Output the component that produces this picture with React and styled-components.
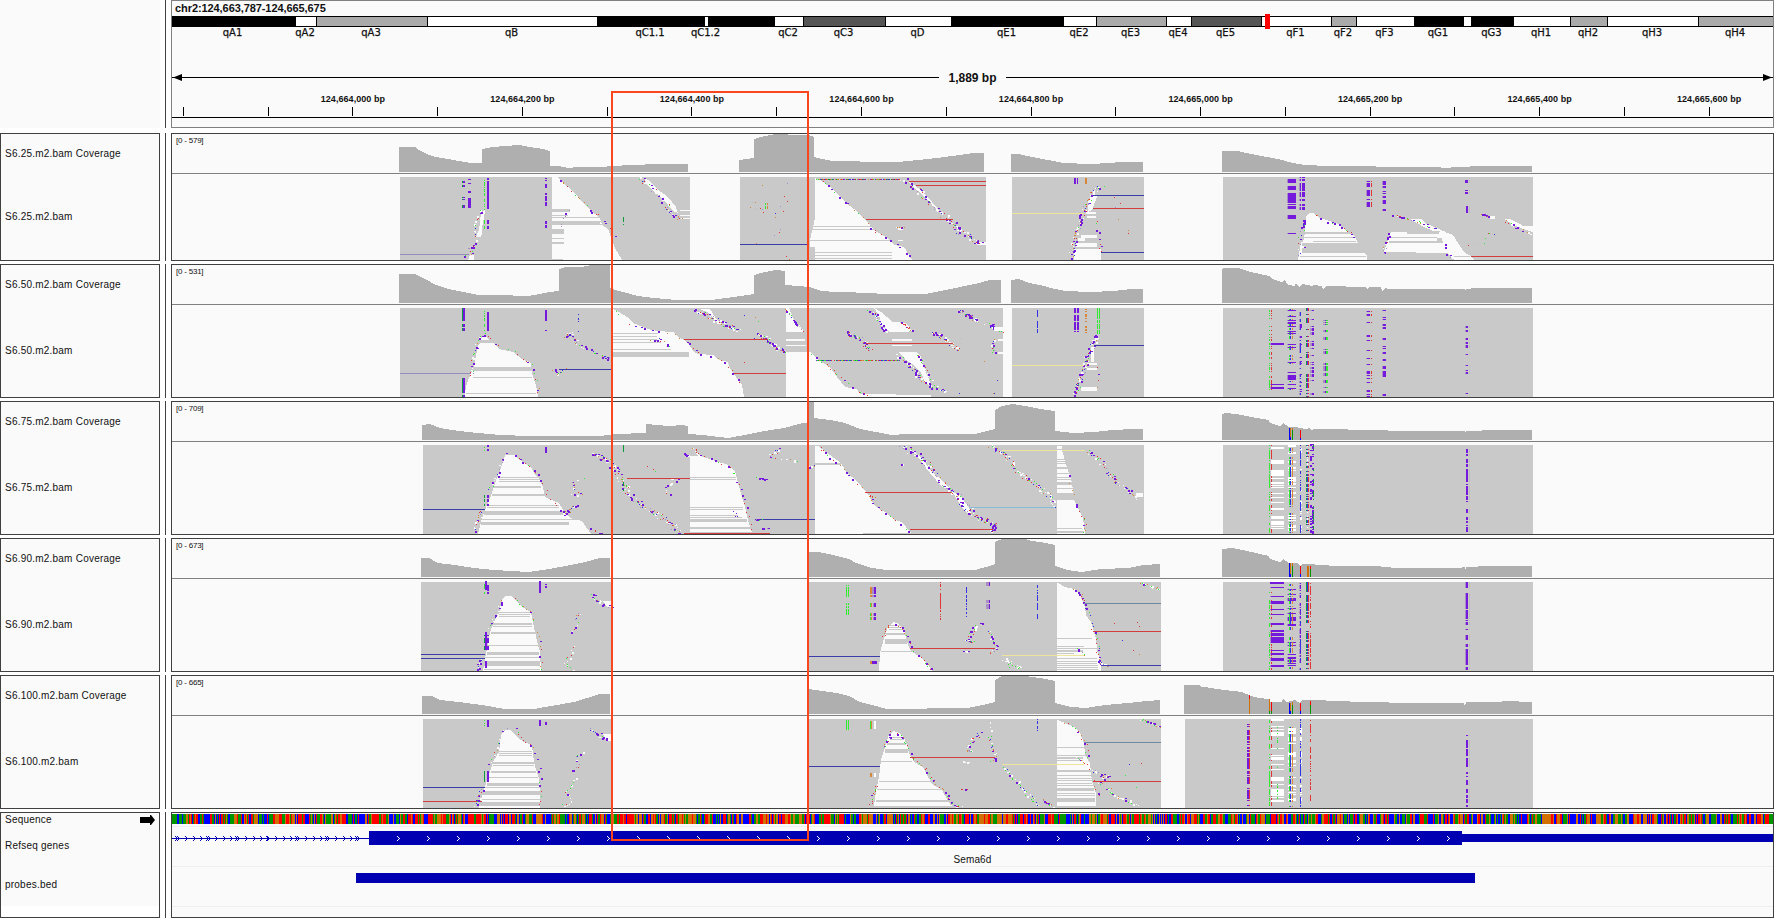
import React from 'react';
import styled, { createGlobalStyle } from 'styled-components';

const GlobalStyle = createGlobalStyle`
  html, body { margin: 0; padding: 0; background: #fff; }
  body { font-family: "Liberation Sans", Arial, sans-serif; color: #111; overflow: hidden; }
`;

const COLORS = {
  P: '#7519dc', M: '#a98ec4', R: '#e23636', G: '#32eb32', D: '#0a9c3c', B: '#3232e6',
  O: '#d6873a', W: '#fafafa', X: '#ffffff', K: '#c9c9c9', L: '#bdbdbd',
  red: '#d23c3c', blue: '#3c3caa', yellow: '#ece59a', violet: '#988cbe', slate: '#6f8a9f', sky: '#84bcd9',
};

/* Track data is stored in three horizontal tiles; these map it to panel pixels. */
const TILE_X = [0, 600, 1190];
const TILE_SCALE = [2.6133, 2.6133, 2.609];
const PANEL_LEFT = 172;
const toX = (t, x) => Math.round(TILE_X[t] + x / TILE_SCALE[t]) - PANEL_LEFT;

const makeRandom = (seed) => {
  let a = seed >>> 0;
  return () => {
    a = (a + 0x6d2b79f5) >>> 0;
    let t = a;
    t = Math.imul(t ^ (t >>> 15), t | 1);
    t ^= t + Math.imul(t ^ (t >>> 7), t | 61);
    return ((t ^ (t >>> 14)) >>> 0) / 4294967296;
  };
};

const points = (s) => s.trim().split(/\s+/).map((p) => p.split(',').map(Number));
const box = (x, y, w, h) => `M${x} ${y}h${w}v${h}h${-w}z`;

/* w: gap polygon, g: read rows, l: insert line, s: mismatches scattered along a path, c: column of variants */
const w = (t, p) => ({ k: 'w', t, p });
const g = (t, rows) => ({ k: 'g', t, rows });
const v = (t, rows) => ({ k: 'g', t, rows, c: 'W' });
const l = (t, x0, x1, y, c) => ({ k: 'l', t, x0, x1, y, c });
const s = (t, p, n, spread = 6, pal = 'PPPGRBOWWWM') => ({ k: 's', t, p, n, spread, pal });
const c = (t, y0, y1, density, cols) => ({ k: 'c', t, y0, y1, density, cols });

const edge = 'PPGRRO';
const sparse = 'GROBLM';

const TRACKS = [
  {
    name: 'S6.25.m2.bam', range: '[0 - 579]', height: 128, y0: 0, top: 133,
    blocks: [[400, 690], [740, 986], [1012, 1144], [1223, 1533]],
    coverage: [
      [0, '1043,441 1085,441 1090,447 1105,456 1120,465 1140,472 1170,478 1200,484 1230,489 1260,489 1260,446 1285,441 1320,438 1355,436 1385,440 1420,446 1437,453 1437,498 1460,499 1485,504 1510,502 1568,501'],
      [1, '0,501 35,498 80,495 155,493 200,492 230,492'],
      [1, '363,480 402,474 402,417 430,408 460,403 520,404 545,404 558,412 558,472 580,477 610,483 635,482 725,486 780,486 830,480 880,475 920,468 960,463 975,459 1004,459'],
      [1, '1074,461 1095,461 1130,471 1170,481 1210,489 1280,493 1330,488 1360,487 1390,485 1418,486'],
      [2, '83,453 125,453 160,463 200,472 240,481 270,490 300,494 360,497 460,499 510,500 650,501 660,503 700,501 760,498 892,498'],
    ],
    bars: [],
    ops: [
      c(0, 540, 625, 0.6, [[1207, 1211, 'D'], [1211, 1216, 'P']]),
      c(0, 537, 625, 0.7, [[1223, 1231, 'P']]),
      c(0, 537, 630, 0.6, [[1265, 1268, 'G']]),
      c(0, 534, 626, 0.92, [[1273, 1278, 'P']]),
      c(0, 660, 688, 0.8, [[1265, 1268, 'G'], [1273, 1278, 'P']]),
      c(0, 534, 567, 0.6, [[1423, 1429, 'P']]),
      c(0, 580, 622, 0.75, [[1423, 1429, 'P']]),
      c(0, 663, 688, 0.5, [[1423, 1429, 'P']]),
      w(0, '1258,640 1267,630 1264,655 1259,680 1260,700 1258,712 1245,712 1252,690 1254,665'),
      w(0, '1224,779 1229,765 1240,765 1240,779'),
      s(0, '1258,628 1248,645 1240,670 1238,700 1243,735 1228,742 1230,760 1213,772', 30, 4),
      l(0, 1045, 1225, 763, 'violet'),
      w(0, '1443,531 1455,531 1485,562 1510,590 1540,628 1568,655 1568,779 1443,779'),
      w(1, '0,655 5,675 20,687 30,710 40,745 58,779 0,779'),
      g(0, '1443,1490,627,637 1443,1485,645,648 1443,1568,651,655 1443,1568,663,675 1443,1475,687,701 1443,1475,714,717 1443,1475,726,731 1443,1470,776,779'),
      g(1, '0,12,663,666 0,14,672,675'),
      s(0, '1455,534 1485,562 1515,592 1540,628 1568,648', 14, 3, edge),
      s(0, '1488,630 1470,648 1462,690', 6, 4, 'PM'),
      s(1, '0,650 20,676 40,712', 4, 2, edge),
      w(1, '118,537 128,540 150,567 178,590 198,620 203,640 192,632 168,600 145,577 124,555'),
      v(1, '208,235,630,633 210,235,645,648 212,235,654,657'),
      s(1, '100,532 118,545 150,580 175,615 185,640 215,658', 50, 7),
      c(1, 651, 675, 0.6, [[60, 64, 'D']]),
      s(1, '385,560 510,550 515,610 380,610 435,615 485,620 380,650 500,680 400,740 520,770', 22, 30, sparse),
      c(1, 609, 627, 0.8, [[432, 434, 'G'], [436, 439, 'O']]),
      l(1, 366, 541, 733, 'blue'),
      w(1, '562,533 575,540 600,560 615,572 640,605 665,628 695,660 715,690 750,715 770,735 795,740 815,779 562,779 545,779 550,720 562,655'),
      g(1, '553,715,678,681 553,718,687,690 546,765,720,722 545,562,742,779 562,763,756,759 562,763,765,768 562,763,773,775'),
      s(1, '565,534 600,560 640,605 695,660 720,695 765,722 815,778', 24, 3, edge),
      { k: 'm', t: 1, x0: 565, x1: 785, y: 538 },
      v(1, '780,793,684,690 780,793,720,723 986,1009,727,735'),
      w(1, '800,540 812,548 838,570 868,605 896,645 886,637 860,605 830,572'),
      s(1, '790,535 830,570 860,605 900,650 925,670 935,690 970,715 990,733', 100, 8),
      s(1, '772,680 795,682', 6, 1),
      l(1, 808, 1009, 544, 'red'), l(1, 825, 1009, 556, 'red'), l(1, 695, 922, 658, 'red'),
      c(1, 534, 552, 0.7, [[1240, 1243, 'P'], [1247, 1250, 'P'], [1268, 1272, 'O']]),
      w(1, '1292,575 1300,590 1286,630 1276,635 1275,610'),
      v(1, '1270,1297,637,641 1272,1297,648,654 1256,1298,705,713 1250,1268,713,722 1244,1300,728,740 1240,1308,747,770 1238,1310,772,779'),
      s(1, '1310,558 1285,575 1270,605 1262,635 1255,670 1245,700 1235,735 1228,775', 85, 6),
      s(1, '1298,650 1302,720 1312,757', 9, 3, edge),
      s(1, '1340,590 1355,630 1380,735', 6, 10, sparse),
      l(1, 1288, 1422, 586, 'blue'), l(1, 1288, 1422, 625, 'red'), l(1, 1077, 1265, 640, 'yellow'), l(1, 1310, 1422, 757, 'blue'),
      c(2, 538, 549, 1, [[253, 257, 'M'], [256, 277, 'P']]),
      c(2, 555, 703, 0.32, [[253, 257, 'M'], [256, 277, 'P']]),
      c(2, 531, 630, 0.6, [[284, 288, 'M'], [287, 290, 'P'], [292, 299, 'P']]),
      c(2, 660, 685, 0.8, [[294, 302, 'P']]),
      c(2, 534, 630, 0.45, [[459, 463, 'M'], [463, 470, 'P'], [471, 474, 'R']]),
      c(2, 537, 632, 0.65, [[501, 504, 'M'], [504, 511, 'P']]),
      c(2, 537, 585, 0.45, [[717, 725, 'P'], [728, 731, 'L']]),
      c(2, 617, 638, 0.9, [[720, 725, 'P'], [728, 731, 'L']]),
      w(2, '303,650 310,640 322,640 340,655 385,672 412,695 428,705 438,728 296,728 300,700'),
      g(2, '300,425,697,701 297,430,711,714 320,432,722,725'),
      w(2, '289,727 296,727 291,759 455,759 463,768 463,779 281,779'),
      g(2, '291,455,730,758 287,460,768,770'),
      s(2, '320,640 360,665 390,672 410,690 430,712', 16, 3, edge),
      s(2, '300,660 292,690 282,725 296,740 275,768', 18, 5),
      w(2, '525,697 640,697 665,695 685,705 700,730 715,755 735,770 742,779 690,779 672,760 507,757 512,735 520,712'),
      g(2, '565,650,697,702 522,645,712,715 645,658,714,724 520,660,724,728'),
      w(2, '575,657 605,657 612,670 668,695 635,693 610,680'),
      s(2, '530,645 560,655 600,665 640,685', 34, 5),
      s(2, '518,700 508,735 505,758', 14, 4),
      s(2, '660,725 672,762 688,778', 9, 3),
      g(2, '690,730,768,770'),
      w(2, '820,657 835,657 860,672 870,678 895,678 895,696 870,688 845,675'),
      v(2, '782,796,649,656'),
      s(2, '820,660 850,680 888,700', 14, 4), s(2, '755,640 785,652', 8, 3),
      s(2, '760,698 800,700 720,735 800,722', 7, 3, sparse),
      l(2, 733, 895, 769, 'red'),
    ],
  },
  {
    name: 'S6.50.m2.bam', range: '[0 - 531]', height: 134, y0: 260, top: 264,
    blocks: [[400, 1003], [1012, 1144], [1223, 1533]],
    coverage: [
      [0, '1043,41 1085,41 1110,56 1140,75 1170,86 1200,94 1250,105 1300,106 1380,108 1410,103 1435,97 1462,93 1462,26 1480,22 1520,20 1545,15 1568,15'],
      [1, '0,15 26,15 26,84 40,90 70,100 100,108 140,114 200,120 290,119 350,112 402,103 402,45 430,37 460,30 483,32 483,75 520,77 545,82 580,92 615,97 720,99 725,102 850,101 890,94 940,82 990,68 1020,60 1048,60'],
      [1, '1074,60 1095,57 1120,69 1160,78 1190,86 1215,93 1280,97 1340,93 1390,88 1418,87'],
      [2, '83,27 90,23 125,24 160,36 205,49 215,58 240,65 247,60 255,74 275,77 277,69 284,80 292,72 305,76 318,78 318,84 322,75 345,78 347,87 355,79 460,80 463,87 470,81 498,81 501,93 509,84 520,87 685,87 717,87 718,95 721,87 745,84 892,84'],
    ],
    bars: [],
    ops: [
      c(0, 144, 212, 0.7, [[1207, 1210, 'D'], [1210, 1215, 'P']]),
      c(0, 150, 212, 0.6, [[1265, 1268, 'G']]),
      c(0, 150, 212, 0.95, [[1273, 1278, 'P']]),
      c(0, 146, 212, 0.65, [[1423, 1429, 'P']]),
      c(0, 157, 215, 0.5, [[1511, 1513, 'B']]),
      w(0, '1260,228 1267,224 1278,240 1258,240'),
      w(0, '1255,248 1290,250 1305,268 1340,275 1365,298 1388,310 1391,340 1400,375 1405,411 1213,411 1220,370 1230,340 1240,320 1243,285 1250,258'),
      g(0, '1235,1390,321,333 1230,1390,351,354 1218,1402,399,402'),
      c(0, 355, 411, 0.8, [[1208, 1211, 'D'], [1211, 1215, 'P']]),
      l(0, 1045, 1230, 340, 'violet'),
      s(0, '1265,218 1250,232 1243,265 1236,298 1235,330 1228,350', 26, 5),
      s(0, '1270,220 1290,250 1340,272 1365,295 1390,315 1395,340 1408,382 1403,405', 18, 2, edge),
      s(0, '1475,228 1490,220 1510,250 1568,285', 40, 6),
      s(0, '1445,328 1455,340 1475,322', 12, 4),
      l(0, 1462, 1568, 328, 'blue'), l(1, 0, 31, 328, 'blue'),
      s(1, '0,285 28,298', 18, 6),
      w(1, '33,148 50,157 75,175 85,190 125,207 150,213 190,217 205,230 220,240 235,258 245,275 255,281 295,285 305,298 335,305 340,325 355,350 370,375 376,411 33,411'),
      g(1, '33,152,219,222 33,150,228,231 33,150,237,240 33,160,245,248 33,185,266,269 33,232,276,290'),
      s(1, '35,148 85,195 145,210 200,225 240,260 260,282 320,300 345,335 370,378', 26, 3, edge),
      s(1, '135,240 155,235 180,265', 12, 5),
      w(1, '262,148 288,148 300,172 318,194 306,190 284,160'),
      s(1, '250,150 290,170 330,195 362,210', 62, 8),
      s(1, '405,218 435,235 460,260 480,275', 46, 6),
      l(1, 220, 440, 238, 'red'), l(1, 350, 486, 340, 'red'),
      s(1, '350,165 440,185 365,315', 5, 9, sparse),
      w(1, '486,144 495,144 505,175 520,200 536,216 486,216'),
      v(1, '486,536,237,242 486,538,255,258'),
      w(1, '486,276 550,276 570,300 600,320 620,350 640,380 672,388 680,402 865,405 865,411 486,411'),
      s(1, '480,146 500,165 510,190 532,212', 22, 3),
      s(1, '550,280 600,320 620,345 675,395 700,403', 18, 3, edge),
      w(1, '715,145 735,155 765,185 800,190 815,212 800,216 755,216 735,185 728,165'),
      s(1, '700,146 722,165 730,190 750,212', 34, 5), s(1, '785,186 800,195 815,213', 14, 3, edge),
      v(1, '763,815,237,242 763,815,255,258'),
      s(1, '640,218 680,235 705,270', 42, 7), s(1, '865,218 900,235 935,270', 42, 6),
      l(1, 695, 922, 250, 'red'),
      { k: 'm', t: 1, x0: 565, x1: 785, y: 301 },
      w(1, '778,277 825,277 840,290 850,330 862,365 868,382 850,365 838,340 822,318 800,300'),
      s(1, '780,285 810,315 830,345 860,375 905,395', 62, 6), s(1, '830,280 850,320 865,365', 18, 3),
      s(1, '940,148 985,183', 32, 5), s(1, '1010,190 1050,215', 18, 6),
      v(1, '1030,1053,202,214 1040,1053,237,242 1040,1053,276,281'),
      s(1, '1035,235 1022,258 1030,278', 14, 4),
      s(1, '920,400 1030,400 1035,335 920,210', 6, 5, sparse),
      c(1, 147, 220, 0.7, [[1142, 1145, 'B']]),
      c(1, 144, 220, 0.65, [[1240, 1243, 'P'], [1247, 1251, 'P']]),
      c(1, 146, 220, 0.65, [[1268, 1272, 'O']]),
      c(1, 144, 225, 0.72, [[1299, 1301, 'G'], [1303, 1306, 'G']]),
      v(1, '1282,1290,262,305 1272,1298,309,315 1272,1298,323,329 1256,1300,381,392'),
      s(1, '1300,225 1285,255 1270,290 1262,330 1250,370 1243,405', 85, 6),
      s(1, '1300,312 1300,385', 5, 2, edge),
      l(1, 1290, 1422, 256, 'blue'), l(1, 1077, 1265, 316, 'yellow'),
      c(2, 146, 400, 0.4, [[206, 209, 'G'], [211, 214, 'R']]),
      c(2, 146, 400, 0.2, [[209, 212, 'M'], [211, 245, 'P']]),
      c(2, 146, 400, 0.3, [[258, 261, 'G'], [261, 264, 'B'], [266, 269, 'O']]),
      c(2, 144, 390, 0.22, [[253, 257, 'M'], [256, 277, 'P']]),
      c(2, 144, 411, 0.45, [[284, 287, 'M'], [287, 290, 'B']]),
      c(2, 144, 411, 0.2, [[284, 287, 'M'], [287, 292, 'P']]),
      c(2, 144, 411, 0.35, [[303, 306, 'D'], [306, 308, 'P'], [308, 310, 'R']]),
      c(2, 150, 411, 0.25, [[314, 317, 'M'], [318, 324, 'P']]),
      c(2, 144, 400, 0.32, [[347, 352, 'M'], [352, 355, 'P'], [356, 360, 'G']]),
      c(2, 144, 411, 0.18, [[459, 463, 'M'], [463, 470, 'P'], [471, 475, 'R']]),
      c(2, 144, 411, 0.24, [[501, 504, 'M'], [504, 511, 'P']]),
      c(2, 150, 411, 0.18, [[717, 720, 'M'], [720, 725, 'P'], [728, 731, 'L']]),
    ],
  },
  {
    name: 'S6.75.m2.bam', range: '[0 - 709]', height: 134, y0: 260, top: 401,
    blocks: [[423, 1144], [1223, 1533]],
    coverage: [
      [0, '1103,495 1125,492 1150,504 1200,512 1250,519 1310,526 1380,529 1450,528 1568,527'],
      [1, '0,527 40,522 120,518 120,492 180,497 215,495 230,498 230,523 270,525 335,533 380,526 430,514 480,503 530,490 545,490 545,426 558,426 558,474 600,480 640,489 680,507 720,517 760,525 800,523 900,521 980,521 1000,515 1032,508 1032,450 1050,437 1080,433 1110,438 1150,448 1188,454 1188,514 1240,519 1290,516 1340,511 1390,507 1418,508'],
      [2, '83,462 95,459 120,461 160,471 205,479 210,489 235,498 243,490 258,501 275,500 303,508 310,504 318,512 322,507 410,507 412,510 515,510 517,513 717,513 718,521 721,513 760,512 762,510 892,510'],
    ],
    bars: [[258, 504, 540, '#00f'], [261, 504, 531, '#d17105'], [261, 531, 540, '#00f'], [266, 504, 511, '#d17105'], [266, 511, 540, '#009600'], [287, 510, 534, '#f00'], [287, 534, 540, '#00f']],
    ops: [
      c(0, 558, 578, 0.6, [[1265, 1268, 'G']]), c(0, 555, 580, 0.8, [[1273, 1278, 'P']]), c(0, 555, 578, 0.6, [[1423, 1429, 'P']]),
      w(0, '1320,585 1342,585 1360,600 1388,620 1395,640 1410,660 1418,680 1425,710 1460,730 1470,750 1490,775 1520,782 1545,822 1249,822 1258,785 1268,750 1285,700 1300,655 1310,625'),
      g(0, '1303,1410,651,653 1303,1410,657,659 1303,1410,663,665 1292,1415,677,683 1285,1425,702,708 1272,1460,735,737 1272,1460,741,743 1265,1470,752,765 1260,1515,777,779 1258,1487,786,795'),
      c(0, 705, 737, 0.8, [[1265, 1268, 'D'], [1273, 1278, 'P']]),
      l(0, 1105, 1267, 748, 'blue'),
      s(0, '1325,580 1310,600 1302,640 1288,665 1278,690', 18, 3), s(0, '1258,750 1250,780 1240,815', 16, 5),
      s(0, '1340,578 1365,605 1390,620 1410,645 1430,708 1460,740 1475,762', 20, 3, edge), s(0, '1540,800 1568,822', 6, 4, edge),
      s(0, '1545,580 1568,588', 12, 4), s(0, '1525,655 1500,665 1500,682 1518,703 1490,705', 16, 4), s(0, '1502,735 1488,745 1478,762', 16, 5),
      s(1, '0,590 25,605 45,640 65,680 85,715 120,745 150,765 185,790 208,820', 120, 8),
      c(1, 555, 576, 0.8, [[60, 64, 'D']]), c(1, 665, 692, 0.8, [[60, 64, 'D']]),
      s(1, '170,652 200,657 170,680 180,705', 16, 4, 'WWWRP'), s(1, '115,617 160,640', 3, 4, 'RG'),
      l(1, 70, 235, 655, 'red'),
      w(1, '240,558 250,575 270,592 300,602 330,612 352,632 360,670 370,710 380,740 388,780 398,817 235,817 235,588 255,588'),
      g(1, '235,355,650,653 235,355,657,659 235,375,741,743 235,375,747,749 235,360,765,767 235,370,771,773 235,385,777,786 235,395,800,807'),
      s(1, '242,560 255,580 300,600 345,625 365,685 382,742 395,812', 26, 3, edge), s(1, '215,582 232,585', 6, 3),
      s(1, '350,748 360,778', 4, 3, 'P'),
      { k: 'l', t: 1, x0: 220, x1: 443, y: 820, c: 'red' },
      l(1, 405, 562, 778, 'blue'), s(1, '403,778 420,778', 7, 2), s(1, '420,804 438,805', 5, 3, 'PM'),
      s(1, '462,560 462,578 435,583 480,600 520,602', 20, 5), s(1, '405,652 435,657', 7, 2, 'PPG'), s(1, '548,620 558,616', 6, 3),
      w(1, '570,558 600,585 630,610 645,640 670,660 695,695 705,715 720,740 745,755 770,780 790,785 800,800 812,820 562,822 562,558'),
      g(1, '562,630,609,614'),
      s(1, '570,558 600,590 645,637 695,695 720,735 765,775 812,817', 32, 3, edge),
      l(1, 695, 922, 697, 'red'), l(1, 810, 1032, 808, 'red'),
      w(1, '822,580 840,592 868,637 898,665 914,688 895,680 862,640'),
      w(1, '922,695 940,705 965,745 972,768 950,750 930,715'),
      s(1, '785,558 830,585 870,630 900,680 930,700 960,745 990,775 1025,790 1030,815', 170, 8),
      s(1, '700,705 715,710', 8, 4, 'RROGW'), s(1, '785,612', 3, 3, 'PWR'),
      l(1, 1050, 1268, 571, 'yellow'), l(1, 965, 1190, 742, 'sky'),
      s(1, '1020,558 1060,580 1090,630 1130,670 1170,700 1190,745', 90, 7, 'WWWWWPGGRBO'),
      w(1, '1194,557 1207,557 1207,570 1212,590 1220,625 1230,655 1235,690 1240,720 1250,745 1262,775 1268,822 1194,822'),
      g(1, '1194,1207,567,570 1194,1218,596,599 1194,1218,603,606 1194,1220,610,613 1194,1220,620,627 1194,1228,639,642 1194,1230,651,653 1194,1230,657,660 1194,1233,667,675 1194,1235,684,687 1194,1238,699,720 1194,1260,804,806 1194,1264,812,818'),
      s(1, '1222,640 1240,720 1262,770 1268,800 1260,818', 16, 3, edge),
      s(1, '1270,570 1300,595 1330,640 1350,665 1380,690 1410,715', 52, 7), v(1, '1402,1419,699,710'),
      c(2, 555, 820, 0.6, [[206, 209, 'G'], [211, 214, 'R']]),
      c(2, 555, 820, 0.34, [[211, 245, 'X']]),
      c(2, 555, 820, 0.34, [[256, 277, 'X']]),
      c(2, 555, 820, 0.65, [[258, 261, 'G'], [261, 264, 'B'], [266, 269, 'O']]),
      c(2, 555, 820, 0.2, [[287, 292, 'X']]), c(2, 555, 770, 0.6, [[287, 290, 'B']]), c(2, 795, 822, 0.6, [[287, 290, 'B']]),
      c(2, 555, 820, 0.3, [[305, 308, 'X']]),
      c(2, 555, 820, 0.5, [[303, 306, 'D'], [306, 308, 'B'], [308, 310, 'R']]),
      c(2, 553, 822, 0.55, [[313, 318, 'P']]), c(2, 553, 822, 0.55, [[318, 324, 'P']]), c(2, 555, 822, 0.3, [[320, 322, 'D']]),
      c(2, 555, 820, 0.65, [[720, 725, 'P'], [728, 731, 'L']]),
    ],
  },
  {
    name: 'S6.90.m2.bam', range: '[0 - 673]', height: 134, y0: 530, top: 538,
    blocks: [[421, 612], [809, 1161], [1223, 1533]],
    coverage: [
      [0, '1100,84 1122,84 1145,98 1190,106 1240,113 1290,121 1380,126 1420,119 1480,108 1530,95 1568,85'],
      [1, '0,84 26,84'],
      [1, '545,66 570,67 610,74 650,86 670,100 710,115 750,121 980,120 1010,110 1032,102 1032,36 1050,28 1110,28 1130,34 1165,38 1188,44 1188,109 1220,120 1260,125 1310,118 1380,113 1420,105 1463,102'],
      [2, '83,57 110,54 150,64 205,78 210,88 235,96 243,88 258,99 283,99 288,108 292,103 360,105 362,108 495,108 500,111 545,114 700,114 717,111 718,123 721,111 780,109 892,108'],
    ],
    bars: [[258, 99, 141, '#00f'], [261, 99, 132, '#d17105'], [261, 132, 141, '#00f'], [266, 99, 108, '#d17105'], [266, 108, 141, '#009600'], [287, 108, 132, '#f00'], [287, 132, 141, '#00f'], [304, 108, 141, '#d17105'], [308, 108, 141, '#d17105'], [314, 108, 117, '#f00'], [314, 117, 141, '#009600']],
    ops: [
      c(0, 156, 192, 0.5, [[1265, 1268, 'G']]), c(0, 153, 180, 0.9, [[1268, 1273, 'P']]), c(0, 165, 192, 0.8, [[1273, 1278, 'P']]),
      c(0, 153, 190, 0.95, [[1409, 1414, 'P']]), c(0, 162, 186, 0.5, [[1423, 1429, 'P']]),
      w(0, '1320,198 1335,198 1350,215 1370,235 1388,247 1392,275 1398,305 1405,345 1411,365 1413,423 1262,423 1268,385 1275,345 1280,305 1290,275 1303,248 1312,210'),
      g(0, '1303,1385,246,248 1303,1385,252,254 1303,1385,258,261 1288,1390,279,284 1288,1390,288,290 1283,1397,306,311 1275,1405,345,347 1272,1408,366,375 1268,1410,380,382 1265,1412,393,409 1265,1412,417,419'),
      l(0, 1100, 1268, 373, 'blue'), l(0, 1100, 1268, 385, 'blue'),
      c(0, 305, 360, 0.9, [[1267, 1273, 'P']]), c(0, 315, 360, 0.7, [[1265, 1267, 'D'], [1273, 1277, 'P']]), c(0, 390, 415, 0.9, [[1267, 1272, 'P']]),
      s(0, '1312,200 1302,240 1288,270 1277,295', 15, 3), s(0, '1255,385 1248,418', 10, 4),
      s(0, '1340,198 1365,230 1392,250 1408,325 1412,380 1414,420', 20, 3, edge),
      s(0, '1545,192 1553,208 1568,215', 14, 5), s(0, '1522,247 1502,260 1508,288 1495,310', 12, 5), s(0, '1505,345 1488,380 1478,400 1492,418', 16, 5, 'GWWWPR'),
      w(1, '8,212 30,212 30,232 18,230'), s(1, '0,220 28,232', 10, 5),
      c(1, 158, 262, 0.72, [[643, 646, 'G'], [648, 651, 'G']]),
      c(1, 170, 200, 0.8, [[706, 711, 'O'], [711, 715, 'M'], [715, 721, 'P']]),
      c(1, 220, 272, 0.6, [[706, 709, 'G'], [709, 712, 'O'], [713, 716, 'M'], [716, 722, 'P']]),
      c(1, 393, 410, 0.7, [[706, 711, 'O'], [711, 723, 'P']]),
      c(1, 157, 270, 0.6, [[888, 890, 'R']]), c(1, 170, 262, 0.65, [[956, 959, 'B']]),
      c(1, 157, 168, 0.7, [[1009, 1017, 'M'], [1017, 1019, 'P']]), c(1, 210, 237, 0.6, [[1009, 1017, 'M'], [1017, 1019, 'P']]),
      c(1, 160, 266, 0.7, [[1142, 1145, 'B']]),
      w(1, '765,277 782,282 795,300 800,325 805,345 812,362 835,380 855,400 868,423 728,423 733,370 742,325 752,290'),
      g(1, '758,785,285,287 755,795,291,293 755,795,297,299 748,800,309,315 745,803,327,342 735,815,363,365'),
      s(1, '755,280 748,300 738,320', 9, 3, edge), s(1, '775,282 795,300 812,355 850,395 868,420', 24, 3, edge),
      l(1, 545, 732, 379, 'blue'), l(1, 810, 1032, 355, 'red'),
      s(1, '995,277 970,300 960,335 975,332', 30, 6), s(1, '1018,300 1022,320 1035,350 1022,370', 22, 4), s(1, '1055,385 1075,405 1100,412', 20, 6, 'WWWWPG'),
      s(1, '945,364 965,364', 4, 1, 'WP'),
      w(1, '1197,158 1215,170 1240,177 1255,195 1268,230 1270,255 1282,275 1290,305 1297,325 1300,360 1308,400 1310,423 1194,423 1194,158'),
      g(1, '1194,1285,324,327 1194,1265,348,352 1194,1298,354,357 1194,1262,360,366 1194,1240,369,372 1194,1298,385,387 1194,1300,393,396 1194,1300,399,401 1194,1302,405,407 1194,1302,411,413 1194,1302,417,419'),
      l(1, 1050, 1268, 376, 'yellow'),
      s(1, '1240,178 1260,198 1272,232 1288,300 1300,330 1300,380 1308,405', 36, 4, edge + 'GB'), s(1, '1245,352 1268,377', 8, 2),
      s(1, '1300,395 1325,408', 12, 5),
      l(1, 1265, 1466, 220, 'slate'), l(1, 1288, 1466, 304, 'red'), l(1, 1310, 1466, 406, 'blue'),
      s(1, '1410,157 1440,168 1462,178', 18, 4, 'WWGGOP'), s(1, '1345,280 1420,278 1345,345 1435,380', 6, 5, sparse),
      c(2, 185, 420, 0.45, [[206, 209, 'G'], [211, 214, 'R']]),
      c(2, 157, 161, 1, [[209, 245, 'P']]),
      c(2, 172, 423, 0.36, [[209, 212, 'M'], [211, 245, 'P']]),
      c(2, 172, 410, 0.22, [[253, 257, 'M'], [256, 277, 'P']]),
      c(2, 162, 420, 0.65, [[258, 261, 'G'], [261, 264, 'B'], [266, 269, 'O']]),
      c(2, 160, 420, 0.6, [[284, 287, 'M'], [287, 290, 'P']]), c(2, 160, 420, 0.4, [[287, 290, 'B']]),
      c(2, 156, 280, 0.8, [[303, 306, 'D'], [306, 308, 'B'], [308, 310, 'R']]), c(2, 300, 420, 0.6, [[303, 306, 'D'], [306, 308, 'B'], [308, 310, 'R']]),
      c(2, 159, 420, 0.7, [[313, 316, 'R']]),
      c(2, 156, 285, 0.65, [[717, 720, 'M'], [720, 725, 'P'], [728, 731, 'L']]), c(2, 297, 330, 0.6, [[717, 720, 'M'], [720, 725, 'P'], [728, 731, 'L']]), c(2, 342, 420, 0.75, [[717, 720, 'M'], [720, 725, 'P'], [728, 731, 'L']]),
    ],
  },
  {
    name: 'S6.100.m2.bam', range: '[0 - 665]', height: 134, y0: 530, top: 675,
    blocks: [[423, 612], [809, 1161], [1185, 1533]],
    coverage: [
      [0, '1103,498 1128,498 1150,511 1200,517 1260,525 1320,536 1395,536 1440,527 1500,517 1568,493'],
      [1, '0,492 26,492'],
      [1, '545,478 580,482 620,489 650,499 680,515 720,529 750,536 960,534 1000,524 1032,516 1032,450 1050,439 1110,439 1150,445 1188,453 1188,518 1230,530 1270,533 1320,524 1380,520 1430,512 1463,510'],
      [1, '1526,465 1568,465'],
      [2, '0,465 40,470 90,479 135,487 160,498 180,505 207,507 210,516 240,516 243,507 253,515 275,511 288,519 292,511 415,513 420,516 518,516 520,519 716,519 718,528 721,516 800,515 825,513 892,516'],
    ],
    bars: [[155, 495, 507, '#f00'], [155, 507, 552, '#d17105'], [207, 507, 543, '#d17105'], [207, 543, 552, '#009600'], [212, 516, 543, '#f00'], [212, 543, 552, '#009600'], [258, 519, 552, '#00f'], [261, 519, 543, '#d17105'], [261, 543, 552, '#00f'], [266, 516, 525, '#d17105'], [266, 525, 552, '#009600'], [287, 519, 543, '#f00'], [287, 543, 552, '#00f'], [314, 513, 525, '#f00'], [314, 525, 552, '#009600']],
    ops: [
      c(0, 571, 592, 0.6, [[1265, 1268, 'G']]), c(0, 569, 592, 0.85, [[1273, 1278, 'P']]), c(0, 571, 588, 0.95, [[1409, 1414, 'P']]), c(0, 571, 588, 0.6, [[1423, 1429, 'P']]),
      w(0, '1320,600 1335,600 1350,620 1370,635 1390,645 1392,675 1398,710 1408,745 1411,780 1411,833 1252,833 1260,800 1270,760 1280,725 1290,690 1303,665 1310,615'),
      g(0, '1303,1390,663,665 1303,1390,669,671 1303,1390,675,677 1288,1395,696,701 1288,1395,705,707 1283,1400,723,728 1278,1405,741,743 1272,1408,759,768 1268,1410,771,773 1262,1410,783,795 1260,1410,807,809 1255,1410,815,827'),
      c(0, 723, 757, 0.85, [[1265, 1268, 'D'], [1273, 1278, 'P']]),
      l(0, 1105, 1267, 772, 'blue'), l(0, 1105, 1260, 814, 'red'),
      s(0, '1325,595 1310,608 1302,650 1288,675 1278,705', 16, 3), s(0, '1258,772 1250,805 1240,828', 14, 4),
      s(0, '1340,590 1365,628 1392,650 1408,720 1412,770 1410,828', 20, 3, edge),
      s(0, '1545,595 1553,608 1568,612', 12, 4), s(0, '1522,665 1502,678 1510,705 1495,725', 12, 4), s(0, '1508,745 1490,768 1480,790 1490,820 1470,827', 20, 4, 'GWWWPR'),
      w(1, '8,612 30,612 30,632 15,630'), s(1, '0,618 28,632', 10, 5),
      c(1, 570, 600, 0.8, [[643, 646, 'G'], [648, 651, 'G']]), c(1, 573, 597, 0.6, [[706, 709, 'G'], [709, 712, 'O'], [716, 720, 'X']]), c(1, 725, 742, 0.6, [[706, 712, 'O'], [716, 720, 'X']]),
      c(1, 567, 603, 0.7, [[1142, 1145, 'B']]),
      w(1, '765,603 782,610 795,625 802,645 808,670 820,695 845,712 858,740 870,765 890,778 905,800 918,828 716,828 722,785 730,740 735,690 745,650 755,615'),
      g(1, '757,795,621,623 757,795,627,629 750,800,639,644 745,805,657,668 733,815,693,696 728,865,753,755 725,890,777,779 722,915,810,815'),
      s(1, '760,605 748,630 738,650', 10, 3, edge), s(1, '722,765 712,790 706,825', 12, 3, edge),
      s(1, '775,607 795,625 812,680 850,715 870,755 905,790 920,822', 36, 3, edge), s(1, '918,825 942,828', 10, 4),
      l(1, 545, 732, 709, 'blue'), l(1, 810, 1032, 682, 'red'),
      s(1, '995,605 970,630 960,662 975,660', 28, 5), s(1, '1018,615 1022,650 1035,675 1022,697', 20, 4),
      s(1, '1055,710 1085,750 1120,795 1145,825', 42, 5, 'WWWWPGGB'), s(1, '1160,812 1180,830', 14, 6), s(1, '945,694 965,694', 4, 1, 'W'), s(1, '942,778 960,778', 5, 1, 'BPR'), s(1, '1020,570 1020,600', 4, 1, 'W'),
      w(1, '1197,569 1215,580 1240,590 1255,610 1265,640 1268,675 1280,700 1285,755 1295,790 1297,828 1194,828 1194,569'),
      g(1, '1194,1268,651,654 1194,1275,675,677 1194,1262,681,687 1194,1262,690,693 1194,1283,720,726 1194,1285,735,738 1194,1285,744,746 1194,1286,750,752 1194,1286,758,761 1194,1290,764,768 1194,1290,773,784 1194,1294,788,790 1194,1294,795,797 1194,1294,803,815'),
      l(1, 1050, 1268, 703, 'yellow'),
      s(1, '1210,578 1240,590 1262,620 1272,650 1275,690 1290,760 1300,800', 24, 4, edge + 'GB'), s(1, '1245,680 1268,703', 8, 2),
      s(1, '1292,720 1310,735 1328,740 1300,760', 24, 6), s(1, '1325,770 1345,795 1370,805 1405,825', 28, 6, 'WWWPGO'),
      l(1, 1265, 1466, 637, 'slate'), l(1, 1288, 1466, 754, 'red'),
      s(1, '1410,568 1440,578 1462,590', 18, 4, 'WWGGOP'), s(1, '1420,695 1345,715 1420,780', 4, 5, sparse),
      c(2, 578, 832, 0.55, [[149, 154, 'P'], [154, 157, 'R']]),
      c(2, 569, 832, 0.6, [[206, 209, 'G'], [211, 214, 'R']]),
      c(2, 567, 573, 1, [[211, 245, 'X']]),
      c(2, 580, 832, 0.32, [[211, 245, 'X']]), c(2, 573, 810, 0.25, [[227, 230, 'G']]),
      c(2, 595, 832, 0.34, [[256, 277, 'X'], [287, 292, 'X']]),
      c(2, 590, 832, 0.6, [[258, 261, 'G'], [261, 264, 'B'], [266, 269, 'O']]),
      c(2, 567, 832, 0.55, [[287, 290, 'B']]),
      c(2, 569, 832, 0.6, [[313, 316, 'R']]),
      c(2, 608, 832, 0.55, [[720, 725, 'P'], [728, 731, 'L']]),
    ],
  },
];

function drawOps(track, seed) {
  const rnd = makeRandom(seed);
  const toY = (y) => Math.round(track.y0 + y / 3) - (track.top + 1);
  const readTop = 43;
  const bottom = track.height - 2;
  const out = [];
  const push = (d, color) => out.push({ d, fill: color });
  track.blocks.forEach(([a, b]) => push(box(a - PANEL_LEFT, readTop, b - a, bottom - readTop), COLORS.K));
  track.ops.forEach((o) => {
    const X = (x) => toX(o.t, x);
    if (o.k === 'w') {
      push(`M${points(o.p).map(([x, y]) => `${X(x)} ${toY(y)}`).join('L')}z`, COLORS.W);
    } else if (o.k === 'g') {
      const d = points(o.rows).map(([a, b, y, z]) => box(X(a), toY(y), X(b) - X(a), Math.max(1, toY(z) - toY(y)))).join('');
      push(d, COLORS[o.c || 'K']);
    } else if (o.k === 'l') {
      push(box(X(o.x0), Math.floor(track.y0 + o.y / 3) - track.top - 1, X(o.x1) - X(o.x0), 1), COLORS[o.c]);
    } else if (o.k === 'm') {
      for (let x = X(o.x0); x < X(o.x1); x += 1) {
        push(box(x, toY(o.y - 1), 1, 1), COLORS['GROBPDK'[Math.floor(rnd() * 7)]]);
      }
    } else if (o.k === 'c') {
      let on = rnd() < o.density;
      const ds = o.cols.map(() => '');
      for (let y = toY(o.y0); y < toY(o.y1); y += 1) {
        if (rnd() < 0.75) on = rnd() < o.density;
        if (on || o.density === 1) {
          o.cols.forEach(([a, b], i) => { ds[i] += box(X(a), y, Math.max(1, X(b) - X(a)), 1); });
        }
      }
      ds.forEach((d, i) => push(d, COLORS[o.cols[i][2]]));
    } else if (o.k === 's') {
      const pts = points(o.p);
      const buckets = {};
      for (let i = 0; i < o.n; i += 1) {
        const f = ((i + rnd()) / o.n) * (pts.length - 1);
        const j = Math.min(Math.floor(f), Math.max(0, pts.length - 2));
        const a = pts[j];
        const b = pts[j + 1] || a;
        const x = a[0] + (b[0] - a[0]) * (f - j) + (rnd() - 0.5) * 2.6 * o.spread;
        const y = a[1] + (b[1] - a[1]) * (f - j) + (rnd() - 0.5) * 1.4 * o.spread;
        const key = o.pal[Math.floor(rnd() * o.pal.length)];
        const big = key === 'P' && o.pal.length > 1;
        const wide = key === 'W' && rnd() < 0.5;
        const yy = Math.min(bottom - 1, Math.max(readTop, toY(y)));
        buckets[key] = (buckets[key] || '') + box(X(x), yy, big || wide ? 2 : 1, (big || wide) && rnd() < 0.6 && yy < bottom - 1 ? 2 : 1);
      }
      Object.keys(buckets).sort((a, b) => (b === 'W') - (a === 'W')).forEach((key) => push(buckets[key], COLORS[key]));
    }
  });
  return out;
}

function drawCoverage(track) {
  const base = 38;
  const toY = (y) => Math.max(0, Math.round(track.y0 + y / 3) - (track.top + 1));
  return track.coverage.map(([t, p]) => {
    const pts = points(p).map(([x, y]) => [toX(t, x), toY(y)]);
    return `M${pts[0][0]} ${base}L${pts.map((q) => q.join(' ')).join('L')}L${pts[pts.length - 1][0]} ${base}z`;
  }).join('');
}

const Page = styled.main`
  position: relative;
  width: 1791px;
  height: 924px;
  background: #fff;
  display: flex;
  flex-direction: column;
`;
const Row = styled.section`
  display: flex;
  gap: 5px;
  height: ${(p) => p.$h}px;
  margin-bottom: ${(p) => (p.$gap === undefined ? 3 : p.$gap)}px;
  flex: none;
`;
const NamePanel = styled.div`
  box-sizing: border-box;
  width: 160px;
  flex: none;
  background: ${(p) => (p.$plain ? '#fafafa' : '#fff')};
  border: ${(p) => (p.$plain ? 'none' : '1px solid #404040')};
`;
const Divider = styled.div`
  width: 1px;
  background: #404040;
`;
const DataPanel = styled.div`
  box-sizing: border-box;
  width: 1603px;
  flex: none;
  background: #fafafa;
  border: 1px solid ${(p) => p.$edge || '#404040'};
  overflow: hidden;
`;
const NameList = styled.div`
  display: flex;
  flex-direction: column;
  height: ${(p) => p.$h}px;
  background: #fafafa;
`;
const TrackName = styled.div`
  box-sizing: border-box;
  height: ${(p) => p.$h}px;
  padding: 0 4px;
  display: flex;
  align-items: center;
  justify-content: space-between;
  font-size: 10px;
  line-height: 12px;
  letter-spacing: 0.22px;
  white-space: nowrap;
`;
const CoverageLane = styled.div`
  display: grid;
  height: 39px;
  border-bottom: 1px solid #808080;
  > * { grid-area: 1 / 1; }
`;
const RangeLabel = styled.span`
  padding: 2px 0 0 4px;
  font-size: 8px;
  line-height: 9px;
  letter-spacing: -0.22px;
`;
const Chart = styled.svg`
  display: block;
  shape-rendering: crispEdges;
`;

const Locus = styled.div`
  box-sizing: border-box;
  height: 15px;
  padding: 1px 0 0 3px;
  font-size: 11px;
  line-height: 13px;
  font-weight: 700;
  letter-spacing: -0.08px;
`;
const Ideogram = styled.div`
  display: flex;
  height: 45px;
`;
const Band = styled.div`
  width: ${(p) => p.$w}px;
  flex: none;
  display: flex;
  flex-direction: column;
  align-items: center;
`;
const BandLabel = styled.span`
  padding-right: 3px;
  font-family: "DejaVu Sans", sans-serif;
  font-size: 10px;
  line-height: 11px;
  -webkit-text-stroke: 0.25px #111;
`;
const BandBar = styled.div`
  box-sizing: border-box;
  width: 100%;
  height: 11px;
  background: ${(p) => p.$fill};
  border-top: 1px solid #000;
  border-bottom: 1px solid #000;
  border-right: 1px solid #000;
  display: flex;
  padding-left: ${(p) => (p.$marker ? 3 : 0)}px;
`;
const LocusMarker = styled.i`
  width: 5px;
  height: 15px;
  margin-top: -3px;
  background: #f00;
`;
const Span = styled.div`
  display: flex;
  align-items: center;
  height: 33px;
  font-size: 12px;
  font-weight: 700;
`;
const SpanText = styled.span`
  width: 67px;
  text-align: center;
`;
const SpanLine = styled.div`
  flex: 1;
  display: flex;
  align-items: center;
  justify-content: ${(p) => (p.$right ? 'flex-end' : 'flex-start')};
  height: 7px;
  background: linear-gradient(#000, #000) 0 3px / 100% 1px no-repeat;
`;
const ArrowHead = styled.i`
  width: 9px;
  height: 7px;
  margin: 0 1px;
  background: #000;
  clip-path: ${(p) => (p.$right ? 'polygon(0 0, 100% 50%, 0 100%)' : 'polygon(100% 0, 0 50%, 100% 100%)')};
`;
const Ruler = styled.div`
  display: flex;
  height: 23px;
  padding-left: 11px;
  border-bottom: 1px solid #000;
`;
const Tick = styled.div`
  width: 84.77px;
  flex: none;
  display: flex;
  flex-direction: column;
  align-items: center;
  margin-left: ${(p) => (p.$first ? -42 : 0)}px;
  font-size: 9px;
  line-height: 10px;
  font-weight: 700;
  letter-spacing: 0.06px;
  white-space: nowrap;
`;
const TickLabel = styled.span`height: 13px;`;
const TickMark = styled.i`
  width: 1px;
  height: 9px;
  background: #000;
`;
const Selection = styled.div`
  position: absolute;
  left: 611px;
  top: 91px;
  width: 194px;
  height: 746px;
  border: 2px solid #fa461c;
`;
const Lane = styled.div`
  box-sizing: border-box;
  height: ${(p) => p.$h}px;
  padding-top: ${(p) => p.$pad || 0}px;
  border-bottom: 1px solid #eeeeee;
`;
const GeneName = styled.div`
  font-size: 10px;
  line-height: 12px;
  letter-spacing: 0.12px;
  text-align: center;
  padding-top: 9px;
`;
const ProbeBar = styled.div`
  width: 1119px;
  height: 10px;
  margin-left: 184px;
  background: #0000b2;
`;

const BANDS = [
  ['qA1', 296, '#000'], ['qA2', 317, '#fff'], ['qA3', 428, '#aaa'], ['qB', 598, '#fff'], ['qC1.1', 705, '#000'],
  ['qC1.2', 709, '#fff'], ['', 775, '#000'], ['qC2', 804, '#fff'], ['qC3', 886, '#555'], ['qD', 952, '#fff'],
  ['qE1', 1064, '#000'], ['qE2', 1097, '#fff'], ['qE3', 1167, '#aaa'], ['qE4', 1192, '#fff'], ['qE5', 1262, '#555'],
  ['qF1', 1332, '#fff', true], ['qF2', 1357, '#aaa'], ['qF3', 1415, '#fff'], ['qG1', 1464, '#000'], ['', 1472, '#fff'],
  ['qG3', 1514, '#000'], ['qH1', 1571, '#fff'], ['qH2', 1608, '#aaa'], ['qH3', 1699, '#fff'], ['qH4', 1774, '#aaa'],
];

const TICKS = Array.from({ length: 19 }, (_, i) => {
  if (i % 2 || i === 0) return '';
  return `${(124663800 + i * 100).toLocaleString('en-US')} bp`;
});

function Header() {
  return (
    <Row $h={128} $gap={5}>
      <NamePanel $plain />
      <Divider />
      <DataPanel $edge="#808080">
        <Locus>chr2:124,663,787-124,665,675</Locus>
        <Ideogram>
          {BANDS.map(([label, end, fill, marker], i) => (
            <Band key={end} $w={end - (i ? BANDS[i - 1][1] : PANEL_LEFT)}>
              <BandBar $fill={fill} $marker={marker}>{marker && <LocusMarker />}</BandBar>
              <BandLabel>{label}</BandLabel>
            </Band>
          ))}
        </Ideogram>
        <Span>
          <SpanLine><ArrowHead /></SpanLine>
          <SpanText>1,889 bp</SpanText>
          <SpanLine $right><ArrowHead $right /></SpanLine>
        </Span>
        <Ruler>
          {TICKS.map((label, i) => (
            <Tick key={i} $first={i === 0}>
              <TickLabel>{label}</TickLabel>
              <TickMark />
            </Tick>
          ))}
        </Ruler>
      </DataPanel>
    </Row>
  );
}

function AlignmentTrack({ track, seed }) {
  const inner = track.height - 2;
  return (
    <Row $h={track.height}>
      <NamePanel>
        <NameList $h={inner}>
          <TrackName $h={39}>{track.name} Coverage</TrackName>
          <TrackName $h={inner - 39}>{track.name}</TrackName>
        </NameList>
      </NamePanel>
      <Divider />
      <DataPanel>
        <CoverageLane>
          <Chart width="1601" height="39">
            <path d={drawCoverage(track)} fill="#afafaf" />
            {track.bars.map(([x, a, b, color], i) => {
              const y = Math.round(track.y0 + a / 3) - track.top - 1;
              return <rect key={i} x={toX(2, x)} y={y} width="1" height={Math.min(38, Math.round(track.y0 + b / 3) - track.top - 1) - y} fill={color} />;
            })}
          </Chart>
          <RangeLabel>{track.range}</RangeLabel>
        </CoverageLane>
        <Chart width="1601" height={inner - 40} viewBox={`0 40 1601 ${inner - 40}`}>
          {drawOps(track, seed).map((o, i) => <path key={i} d={o.d} fill={o.fill} />)}
        </Chart>
      </DataPanel>
    </Row>
  );
}

const BASES = ['#ff0000', '#0000ff', '#009600', '#d17105'];

function Sequence() {
  const rnd = makeRandom(11);
  const paths = ['', '', '', ''];
  let last = 0;
  for (let x = 0; x < 1601; x += 1) {
    if (rnd() > 0.22) last = Math.floor(rnd() * 4);
    paths[last] += box(x, 0, 1, 10);
  }
  return (
    <Chart width="1601" height="10">
      {paths.map((d, i) => <path key={i} d={d} fill={BASES[i]} />)}
    </Chart>
  );
}

const INTRON_ARROWS = [458, 463, 484, 505, 523, 538, 543, 562, 583, 602, 615, 620, 640, 661, 679, 694, 699, 719, 740, 758, 771, 776, 797, 818, 837, 850, 855, 876, 896, 915, 929, 934];
const chevron = (x, y) => [0, 1, 2, 1, 0].map((dx, i) => box(x + dx, y + i, 1, 1)).join('');

function Gene() {
  const exon = Array.from({ length: 36 }, (_, i) => chevron(Math.round(397 + i * 30) - PANEL_LEFT, 5)).join('');
  return (
    <Chart width="1601" height="14">
      <rect x="0" y="7" width="198" height="1" fill="#0000b2" />
      <path d={INTRON_ARROWS.map((x) => chevron(toX(0, x), 5)).join('')} fill="#0000b2" />
      <rect x="197" y="0" width="1093" height="14" fill="#0000b2" />
      <rect x="1290" y="3" width="311" height="8" fill="#0000b2" />
      <path d={exon} fill="#fff" />
    </Chart>
  );
}

function FeatureTracks() {
  return (
    <Row $h={106} $gap={0}>
      <NamePanel>
        <NameList $h={93}>
          <TrackName $h={15}>
            Sequence
            <svg width="15" height="10" viewBox="0 0 15 10"><path d="M0 2h10V0h1l4 5-4 5h-1V8H0z" fill="#000" /></svg>
          </TrackName>
          <TrackName $h={38}>Refseq genes</TrackName>
          <TrackName $h={42}>probes.bed</TrackName>
        </NameList>
      </NamePanel>
      <Divider />
      <DataPanel>
        <Lane $h={14} $pad={1}><Sequence /></Lane>
        <Lane $h={40} $pad={4}>
          <Gene />
          <GeneName>Sema6d</GeneName>
        </Lane>
        <Lane $h={40} $pad={6}><ProbeBar /></Lane>
      </DataPanel>
    </Row>
  );
}

export default function App() {
  return (
    <Page>
      <GlobalStyle />
      <Header />
      {TRACKS.map((track, i) => <AlignmentTrack key={track.name} track={track} seed={31 + i * 17} />)}
      <FeatureTracks />
      <Selection />
    </Page>
  );
}
